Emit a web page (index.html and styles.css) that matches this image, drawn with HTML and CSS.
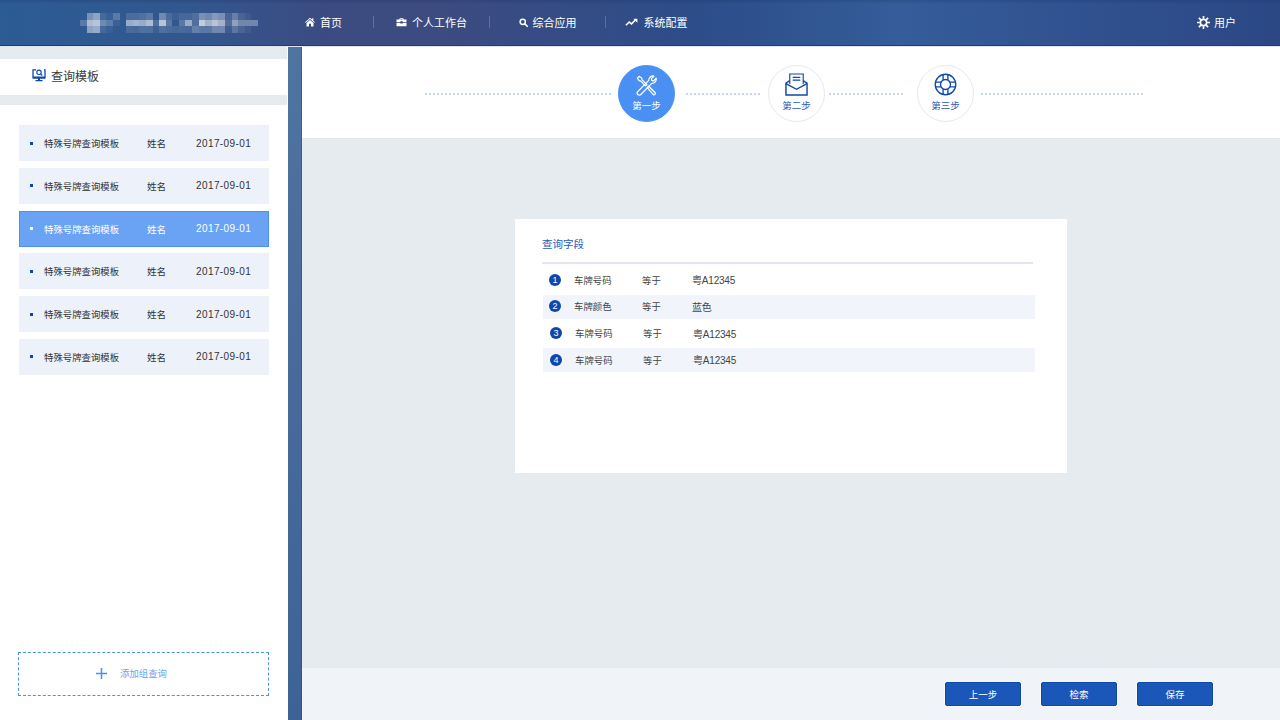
FILE: index.html
```html
<!DOCTYPE html>
<html lang="zh-CN">
<head>
<meta charset="utf-8">
<title>查询模板</title>
<link rel="stylesheet" href="styles.css">
</head>
<body>
<div class="app">
  <header class="topbar">
    <svg class="logo" viewBox="0 0 27 3" width="180" height="20" shape-rendering="crispEdges" aria-hidden="true">
      <g fill="#fff">
        <rect x="1" y="0" width="1" height="1" fill-opacity=".35"/><rect x="2" y="0" width="1" height="1" fill-opacity=".45"/><rect x="3" y="0" width="1" height="1" fill-opacity=".1"/><rect x="4" y="0" width="1" height="1" fill-opacity=".05"/><rect x="5" y="0" width="1" height="1" fill-opacity=".2"/><rect x="7" y="0" width="1" height="1" fill-opacity=".12"/><rect x="8" y="0" width="1" height="1" fill-opacity=".12"/><rect x="9" y="0" width="1" height="1" fill-opacity=".15"/><rect x="10" y="0" width="1" height="1" fill-opacity=".2"/><rect x="12" y="0" width="1" height="1" fill-opacity=".3"/><rect x="13" y="0" width="1" height="1" fill-opacity=".12"/><rect x="14" y="0" width="1" height="1" fill-opacity=".05"/><rect x="15" y="0" width="1" height="1" fill-opacity=".1"/><rect x="16" y="0" width="1" height="1" fill-opacity=".1"/><rect x="17" y="0" width="1" height="1" fill-opacity=".15"/><rect x="18" y="0" width="1" height="1" fill-opacity=".35"/><rect x="19" y="0" width="1" height="1" fill-opacity=".3"/><rect x="20" y="0" width="1" height="1" fill-opacity=".4"/><rect x="21" y="0" width="1" height="1" fill-opacity=".35"/><rect x="22" y="0" width="1" height="1" fill-opacity=".1"/><rect x="23" y="0" width="1" height="1" fill-opacity=".25"/><rect x="24" y="0" width="1" height="1" fill-opacity=".1"/><rect x="25" y="0" width="1" height="1" fill-opacity=".05"/>
        <rect x="0" y="1" width="1" height="1" fill-opacity=".2"/><rect x="1" y="1" width="1" height="1" fill-opacity=".6"/><rect x="2" y="1" width="1" height="1" fill-opacity=".65"/><rect x="3" y="1" width="1" height="1" fill-opacity=".3"/><rect x="4" y="1" width="1" height="1" fill-opacity=".22"/><rect x="5" y="1" width="1" height="1" fill-opacity=".05"/><rect x="7" y="1" width="1" height="1" fill-opacity=".5"/><rect x="8" y="1" width="1" height="1" fill-opacity=".55"/><rect x="9" y="1" width="1" height="1" fill-opacity=".5"/><rect x="10" y="1" width="1" height="1" fill-opacity=".6"/><rect x="11" y="1" width="1" height="1" fill-opacity=".15"/><rect x="12" y="1" width="1" height="1" fill-opacity=".65"/><rect x="13" y="1" width="1" height="1" fill-opacity=".2"/><rect x="15" y="1" width="1" height="1" fill-opacity=".2"/><rect x="16" y="1" width="1" height="1" fill-opacity=".5"/><rect x="17" y="1" width="1" height="1" fill-opacity=".15"/><rect x="18" y="1" width="1" height="1" fill-opacity=".7"/><rect x="19" y="1" width="1" height="1" fill-opacity=".55"/><rect x="20" y="1" width="1" height="1" fill-opacity=".65"/><rect x="21" y="1" width="1" height="1" fill-opacity=".55"/><rect x="22" y="1" width="1" height="1" fill-opacity=".15"/><rect x="23" y="1" width="1" height="1" fill-opacity=".45"/><rect x="24" y="1" width="1" height="1" fill-opacity=".3"/><rect x="25" y="1" width="1" height="1" fill-opacity=".3"/><rect x="26" y="1" width="1" height="1" fill-opacity=".3"/>
        <rect x="1" y="2" width="1" height="1" fill-opacity=".45"/><rect x="2" y="2" width="1" height="1" fill-opacity=".5"/><rect x="3" y="2" width="1" height="1" fill-opacity=".1"/><rect x="4" y="2" width="1" height="1" fill-opacity=".05"/><rect x="7" y="2" width="1" height="1" fill-opacity=".12"/><rect x="8" y="2" width="1" height="1" fill-opacity=".1"/><rect x="9" y="2" width="1" height="1" fill-opacity=".15"/><rect x="10" y="2" width="1" height="1" fill-opacity=".15"/><rect x="11" y="2" width="1" height="1" fill-opacity=".05"/><rect x="12" y="2" width="1" height="1" fill-opacity=".15"/><rect x="13" y="2" width="1" height="1" fill-opacity=".12"/><rect x="14" y="2" width="1" height="1" fill-opacity=".1"/><rect x="15" y="2" width="1" height="1" fill-opacity=".12"/><rect x="16" y="2" width="1" height="1" fill-opacity=".1"/><rect x="17" y="2" width="1" height="1" fill-opacity=".25"/><rect x="18" y="2" width="1" height="1" fill-opacity=".2"/><rect x="19" y="2" width="1" height="1" fill-opacity=".2"/><rect x="20" y="2" width="1" height="1" fill-opacity=".3"/><rect x="21" y="2" width="1" height="1" fill-opacity=".3"/><rect x="22" y="2" width="1" height="1" fill-opacity=".05"/><rect x="23" y="2" width="1" height="1" fill-opacity=".2"/><rect x="24" y="2" width="1" height="1" fill-opacity=".1"/><rect x="25" y="2" width="1" height="1" fill-opacity=".05"/>
      </g>
    </svg>
    <nav class="nav">
      <a class="nav-item nav-first">
        <svg class="nav-icon" viewBox="0 0 12 12" width="10" height="10"><path fill="#fff" d="M6 .8 0 6.200l.8.8L6 2.400l5.200 4.600.8-.8-2-1.800V1.400H8.600v1.700zM1.800 7.200V11.500h3V8.200h2.400v3.300h3V7.200L6 3.500z"/></svg>
        <span>首页</span>
      </a>
      <a class="nav-item">
        <svg class="nav-icon" viewBox="0 0 12 12" width="11" height="10"><path fill="#fff" d="M4 1.500h4l.8 1.500H12v3H7.500v-.8h-3V6H0V3h3.200zM5 2.500l-.4.500h2.800L7 2.500zM0 6.800h4.500v.9h3v-.9H12V11H0z"/></svg>
        <span>个人工作台</span>
      </a>
      <a class="nav-item">
        <svg class="nav-icon" viewBox="0 0 12 12" width="9" height="9"><circle cx="5" cy="5" r="3.500" fill="none" stroke="#fff" stroke-width="2"/><path d="M7.500 7.500 11 11" stroke="#fff" stroke-width="2.200" stroke-linecap="round"/></svg>
        <span>综合应用</span>
      </a>
      <a class="nav-item nav-last">
        <svg class="nav-icon" viewBox="0 0 14 10" width="13" height="9"><path d="M.8 8 4.500 4.500l2.500 2L11.500 2" fill="none" stroke="#fff" stroke-width="1.700"/><path fill="#fff" d="M9 .8h4.500v4.400z"/></svg>
        <span>系统配置</span>
      </a>
    </nav>
    <div class="user">
      <svg class="user-icon" viewBox="0 0 14 14" width="13" height="13"><g stroke="#fff" stroke-width="1.800"><path d="M7 0v3M7 11v3M0 7h3M11 7h3M2 2l2.200 2.200M9.800 9.800 12 12M12 2 9.800 4.200M4.200 9.800 2 12"/></g><circle cx="7" cy="7" r="3.400" fill="none" stroke="#fff" stroke-width="1.800"/></svg>
      <span>用户</span>
    </div>
  </header>
  <div class="body">
    <aside class="sidebar">
      <div class="band band-top"></div>
      <div class="side-title">
        <svg class="side-icon" viewBox="0 0 14 13" width="14" height="13"><path fill="none" stroke="#0f47ad" stroke-width="1.300" d="M4 .8H1v8h12v-8h-1"/><path fill="#0f47ad" d="M1 7.500h12V9.500H1zM6 9.500h2v1.700H6zM3.500 11h7v1.200h-7z"/><circle cx="7" cy="3.300" r="2.200" fill="none" stroke="#0f47ad" stroke-width="1.100"/><path d="m8.600 5 1.600 1.500" stroke="#0f47ad" stroke-width="1.200"/></svg>
        <span>查询模板</span>
      </div>
      <div class="band band-bottom"></div>
      <ul class="tpl-list">
        <li class="tpl"><i class="tpl-dot"></i><span class="tpl-name">特殊号牌查询模板</span><span class="tpl-owner">姓名</span><span class="tpl-date">2017-09-01</span></li>
        <li class="tpl"><i class="tpl-dot"></i><span class="tpl-name">特殊号牌查询模板</span><span class="tpl-owner">姓名</span><span class="tpl-date">2017-09-01</span></li>
        <li class="tpl tpl-active"><i class="tpl-dot"></i><span class="tpl-name">特殊号牌查询模板</span><span class="tpl-owner">姓名</span><span class="tpl-date">2017-09-01</span></li>
        <li class="tpl"><i class="tpl-dot"></i><span class="tpl-name">特殊号牌查询模板</span><span class="tpl-owner">姓名</span><span class="tpl-date">2017-09-01</span></li>
        <li class="tpl"><i class="tpl-dot"></i><span class="tpl-name">特殊号牌查询模板</span><span class="tpl-owner">姓名</span><span class="tpl-date">2017-09-01</span></li>
        <li class="tpl"><i class="tpl-dot"></i><span class="tpl-name">特殊号牌查询模板</span><span class="tpl-owner">姓名</span><span class="tpl-date">2017-09-01</span></li>
      </ul>
      <button class="add-btn">
        <svg class="add-icon" viewBox="0 0 11 11" width="11" height="11"><path d="M5.500 0v11M0 5.500h11" stroke="#4a90f2" stroke-width="1.500"/></svg>
        <span>添加组查询</span>
      </button>
    </aside>
    <div class="strip"></div>
    <main class="main">
      <section class="steps">
        <div class="dots dots-1"></div>
        <div class="step step-active">
          <svg class="step-icon step-icon-tools" viewBox="0 0 24 24" width="21" height="21" fill="none" stroke="#fff" stroke-width="1.400" stroke-linejoin="round"><path d="M1.500 3.500 3.500 1.500 6.500 3.500 7 5.500 12.500 11 11 12.500 5.500 7 3.500 6.500z"/><path d="M12.800 14.500 14.500 12.800 22 20.300A1.700 1.700 0 0 1 19.800 22.500z"/><path d="M14.600 6.200A4.800 4.800 0 0 1 20.500 1.200L17.600 4.100 18 6.200 20.100 6.600 23 3.700A4.800 4.800 0 0 1 18 9.600L5.500 22.300A2.100 2.100 0 0 1 2 19z"/></svg>
          <span class="step-label">第一步</span>
        </div>
        <div class="dots dots-2"></div>
        <div class="step">
          <svg class="step-icon" viewBox="0 0 24 24" width="23" height="23" fill="none" stroke="#0f47ad" stroke-width="1.500"><path d="M5 11.500V1h14v10.500" stroke-width="1.200"/><path d="M8 4.500h8M8 7.500h8" stroke-width="1.300"/><path d="M5 8 1 10.500V23h22V10.500L19 8" /><path d="M1 11l11 6 11-6"/></svg>
          <span class="step-label">第二步</span>
        </div>
        <div class="dots dots-3"></div>
        <div class="step">
          <svg class="step-icon" viewBox="0 0 24 24" width="23" height="23" fill="none" stroke="#0f47ad" stroke-width="1.400"><circle cx="12" cy="12" r="10.700"/><circle cx="12" cy="12" r="5.200"/><path d="M9.500 1.600v5.600M14.500 1.600v5.600M9.500 16.800v5.600M14.500 16.800v5.600M1.600 9.500h5.600M1.600 14.500h5.600M16.800 9.500h5.600M16.800 14.500h5.600"/></svg>
          <span class="step-label">第三步</span>
        </div>
        <div class="dots dots-4"></div>
      </section>
      <section class="panel">
        <div class="card">
          <h2 class="card-title">查询字段</h2>
          <div class="fields">
            <div class="field"><b class="num">1</b><span class="f-name">车牌号码</span><span class="f-op">等于</span><span class="f-val">粤A12345</span></div>
            <div class="field field-alt"><b class="num">2</b><span class="f-name">车牌颜色</span><span class="f-op">等于</span><span class="f-val">蓝色</span></div>
            <div class="field field-shift"><b class="num">3</b><span class="f-name">车牌号码</span><span class="f-op">等于</span><span class="f-val">粤A12345</span></div>
            <div class="field field-alt field-shift"><b class="num">4</b><span class="f-name">车牌号码</span><span class="f-op">等于</span><span class="f-val">粤A12345</span></div>
          </div>
        </div>
      </section>
      <footer class="actions">
        <button class="btn">上一步</button>
        <button class="btn">检索</button>
        <button class="btn">保存</button>
      </footer>
    </main>
  </div>
</div>
</body>
</html>
```
FILE: styles.css
```css
* { box-sizing: border-box; }
html, body { margin: 0; height: 100%; overflow: hidden; }
body {
  font-family: "Liberation Sans", "Noto Sans CJK SC", sans-serif;
  color: #333;
  background: #fff;
}
.app { width: 1280px; height: 720px; display: flex; flex-direction: column; }

.topbar {
  height: 46px;
  flex: none;
  display: flex;
  align-items: center;
  padding: 0 0 1px 80px;
  color: #fff;
  border-bottom: 1px solid #1c3f78;
  background:
    linear-gradient(180deg, rgba(20, 40, 90, .22) 0, rgba(20, 40, 90, 0) 4px),
    linear-gradient(90deg, #2c5c95 0, #33568e 200px, #3c4b81 330px, #3d4b80 430px, #2c4d89 700px, #355d99 900px, #30508e 1100px, #2b4885 1280px);
}
.logo { flex: none; width: 178px; margin-top: 2px; overflow: visible; filter: blur(.5px); }
.nav { display: flex; align-items: center; height: 100%; }
.nav-item {
  width: 116px;
  height: 12px;
  display: flex;
  align-items: center;
  justify-content: center;
  gap: 5px;
  font-size: 11px;
  color: #fff;
  border-right: 1px solid rgba(255, 255, 255, .2);
}
.nav-first { padding-left: 16px; }
.nav-last { border-right: 0; padding-right: 16px; gap: 6px; }
.nav-icon { flex: none; }
.user {
  margin-left: auto;
  padding-right: 44px;
  display: flex;
  align-items: center;
  gap: 4px;
  font-size: 11px;
}

.body { flex: 1; display: flex; min-height: 0; border-top: 1px solid #dfe4ec; }

.sidebar {
  width: 288px;
  flex: none;
  display: flex;
  flex-direction: column;
  padding-right: 1px;
  background: #fff;
}
.band { background: #e6ebf0; flex: none; }
.band-top { height: 12px; }
.band-bottom { height: 10px; }
.side-title {
  height: 36px;
  display: flex;
  align-items: center;
  gap: 5px;
  padding: 0 0 3px 32px;
  font-size: 12px;
  color: #3a3a3a;
}
.tpl-list {
  list-style: none;
  margin: 20.300px 0 0 19px;
  padding: 0;
  width: 250px;
  display: flex;
  flex-direction: column;
  gap: 6.700px;
}
.tpl {
  height: 36px;
  display: flex;
  align-items: center;
  background: #edf1fa;
  padding-left: 11px;
  font-size: 9.400px;
  color: #333;
}
.tpl-dot { width: 3px; height: 3px; background: #0f47ad; margin-right: 11px; flex: none; }
.tpl-name { width: 103px; flex: none; }
.tpl-owner { width: 49px; flex: none; font-size: 9.500px; }
.tpl-date { font-size: 10px; letter-spacing: .4px; }
.tpl-active {
  background: #6aa3f3;
  box-shadow: inset 0 0 0 1px #4f90ec;
  color: #fff;
}
.tpl-active .tpl-dot { background: #fff; }
.add-btn {
  margin: auto 0 24px 18px;
  width: 251px;
  height: 44px;
  flex: none;
  display: flex;
  align-items: center;
  justify-content: center;
  gap: 13px;
  padding: 0 24px 2px 0;
  background: #fff;
  border: 1px dashed #4a90f2;
  font-family: inherit;
  font-size: 9.400px;
  color: #6ea3ee;
}

.strip {
  width: 14px;
  flex: none;
  background: linear-gradient(180deg, #4f749f 0, #3d6297 100%);
  box-shadow: inset -1px 0 0 rgba(30, 60, 110, .35);
}

.main { flex: 1; display: flex; flex-direction: column; min-width: 0; }
.steps {
  height: 91px;
  flex: none;
  display: flex;
  align-items: center;
  padding: 2px 0 0 123px;
  background: #fff;
}
.dots {
  height: 2px;
  flex: none;
  background: linear-gradient(90deg, #c3d6f4 2px, transparent 2px) 0 0 / 4px 2px repeat-x;
}
.dots-1 { width: 187px; margin-right: 6px; }
.dots-2 { width: 74px; margin: 0 8px 0 11px; }
.dots-3 { width: 75px; margin: 0 13px 0 4px; }
.dots-4 { width: 163px; margin-left: 7px; }
.step {
  width: 57px;
  height: 57px;
  flex: none;
  border-radius: 50%;
  border: 1.500px solid #e4e9f1;
  display: flex;
  flex-direction: column;
  align-items: center;
  padding-top: 7px;
  background: #fff;
}
.step-icon { flex: none; }
.step-icon-tools { margin: 2px 0 0; }
.step-label { font-size: 9.500px; line-height: 12px; margin-top: 4px; color: #2a5ab8; }
.step-active { background: #4a90f2; border-color: #4a90f2; }
.step-active .step-label { color: #fff; }

.panel { flex: 1; background: #e6ebf0; padding-top: 80px; min-height: 0; border-top: 1px solid #e2e7ee; }
.card {
  width: 552px;
  height: 254px;
  margin: 0 auto;
  background: #fff;
  padding: 17px 32px 0 27px;
}
.card-title {
  margin: 0;
  width: 491px;
  height: 28px;
  border-bottom: 2px solid #e3e6ec;
  font-size: 10.500px;
  font-weight: 400;
  line-height: 16px;
  color: #2a5ab8;
}
.fields { margin: 4px 0 0 1px; width: 492px; display: flex; flex-direction: column; gap: 2.670px; }
.field {
  height: 24px;
  display: flex;
  align-items: center;
  padding: 0 0 1px 6px;
  font-size: 9.400px;
  color: #444;
}
.field-alt { background: #f1f4fb; }
.field-shift { padding: 0 0 0 7px; }
.num {
  width: 12px;
  height: 12px;
  flex: none;
  border-radius: 50%;
  background: #0f47ad;
  color: #fff;
  font-size: 9px;
  font-weight: 400;
  line-height: 12px;
  text-align: center;
  margin-right: 13px;
}
.f-name { width: 68px; flex: none; }
.f-op { width: 50px; flex: none; }
.f-val { font-size: 10px; letter-spacing: -.2px; }

.actions {
  height: 52px;
  flex: none;
  display: flex;
  align-items: center;
  justify-content: flex-end;
  gap: 20px;
  padding-right: 67px;
  background: #f0f3f8;
}
.btn {
  width: 76px;
  height: 24px;
  padding: 0;
  border: 1px solid #0d47ad;
  border-radius: 2px;
  background: #1b57b8;
  box-shadow: 0 0 0 1px rgba(255, 255, 255, .6);
  color: #fff;
  font-family: inherit;
  font-size: 9.500px;
}
```
